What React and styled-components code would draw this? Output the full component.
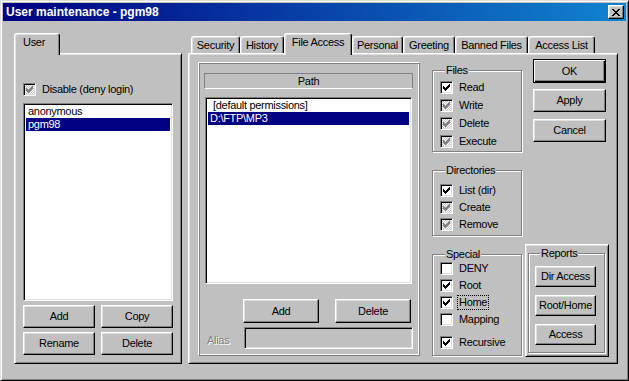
import React from 'react';
import styled, { createGlobalStyle } from 'styled-components';

const Global = createGlobalStyle`
  html, body { margin: 0; padding: 0; background: #c0c0c0; }
  body { font-family: "Liberation Sans", Arial, sans-serif; font-size: 11px; }
  * { box-sizing: border-box; }
`;

const Window = styled.div`
  width: 629px;
  height: 381px;
  background: #c0c0c0;
  border: 1px solid;
  border-color: #dfdfdf #000 #000 #dfdfdf;
  box-shadow: inset 1px 1px #fff, inset -1px -1px #808080;
  padding: 2px;
  display: flex;
  flex-direction: column;
  font-family: "Liberation Sans", Arial, sans-serif;
  font-size: 11px;
  letter-spacing: -0.3px;
  color: #000;
  overflow: hidden;
`;

const TitleBar = styled.div`
  height: 18px;
  flex: none;
  display: flex;
  align-items: center;
  padding: 0 2px 0 3px;
  background: linear-gradient(to right, #000080, #1084d0);
`;

const Title = styled.span`
  color: #fff;
  font-weight: bold;
  font-size: 12px;
  letter-spacing: 0;
`;

const CloseBtn = styled.div`
  margin-left: auto;
  width: 16px;
  height: 14px;
  background: #c0c0c0;
  border: 1px solid;
  border-color: #fff #000 #000 #fff;
  box-shadow: inset -1px -1px #808080, inset 1px 1px #dfdfdf;
  display: flex;
  align-items: center;
  justify-content: center;
  svg { display: block; }
`;

const Body = styled.div`
  flex: 1;
  display: flex;
  padding: 12px 0 0 11px;
`;

const TabSection = styled.div`
  width: ${p => p.$w}px;
  margin-left: ${p => p.$ml || 0}px;
  display: flex;
  flex-direction: column;
`;

const TabRow = styled.div`
  height: 20px;
  display: flex;
  align-items: flex-end;
  padding-left: ${p => p.$pl || 0}px;
`;

const Tab = styled.div`
  position: relative;
  z-index: ${p => (p.$active ? 2 : 1)};
  width: ${p => p.$w}px;
  height: ${p => (p.$active ? 22 : 17)}px;
  margin-bottom: ${p => (p.$active ? -2 : 0)}px;
  background: #c0c0c0;
  border-top: 1px solid #fff;
  border-left: 1px solid #fff;
  border-right: 1px solid #000;
  border-radius: 3px 3px 0 0;
  box-shadow: inset -1px 0 #808080, inset 1px 1px #dfdfdf;
  display: flex;
  justify-content: ${p => (p.$start ? 'flex-start' : 'center')};
  padding: 2px ${p => (p.$start ? 0 : 1)}px 0 ${p => (p.$start ? 8 : 1)}px;
  line-height: 13px;
  white-space: nowrap;
`;

const Panel = styled.div`
  height: 311px;
  border: 1px solid;
  border-color: #fff #000 #000 #fff;
  box-shadow: inset 1px 1px #dfdfdf, inset -1px -1px #808080;
  padding: ${p => p.$pad};
  display: flex;
  flex-direction: ${p => p.$dir || 'column'};
`;

const Row = styled.div`
  display: flex;
  align-items: center;
  gap: ${p => p.$gap ?? 5}px;
  height: ${p => p.$h || 13}px;
  margin-top: ${p => p.$mt || 0}px;
  line-height: 13px;
  white-space: nowrap;
`;

const Box = styled.span`
  width: 13px;
  height: 13px;
  flex: none;
  border: 1px solid;
  border-color: #808080 #fff #fff #808080;
  box-shadow: inset 1px 1px #000, inset -1px -1px #dfdfdf;
  background: ${p =>
    p.$disabled
      ? 'repeating-conic-gradient(#c0c0c0 0 25%, #fff 0 50%) 0 0 / 2px 2px'
      : '#fff'};
  display: flex;
  align-items: center;
  justify-content: center;
  svg { display: block; }
`;

const Label = styled.span`
  padding: 0 1px;
  outline: ${p => (p.$focus ? '1px dotted #000' : 'none')};
  outline-offset: 0;
`;

const ListBox = styled.div`
  height: ${p => p.$h}px;
  margin: ${p => p.$m || 0};
  background: #fff;
  border: 1px solid;
  border-color: #808080 #fff #fff #808080;
  box-shadow: inset 1px 1px #000, inset -1px -1px #dfdfdf;
  padding: 1px 2px;
  flex: none;
`;

const ListItem = styled.div`
  height: 13px;
  line-height: 13px;
  padding-left: ${p => (p.$indent ? 5 : 2)}px;
  background: ${p => (p.$sel ? '#000080' : 'transparent')};
  color: ${p => (p.$sel ? '#fff' : '#000')};
  white-space: nowrap;
`;

const Button = styled.div`
  width: ${p => p.$w}px;
  height: ${p => p.$h || 23}px;
  flex: none;
  margin: ${p => p.$m || 0};
  background: #c0c0c0;
  border: 1px solid;
  border-color: ${p => (p.$def ? '#000' : '#fff #000 #000 #fff')};
  box-shadow: ${p =>
    p.$def
      ? 'inset 1px 1px #fff, inset -1px -1px #000, inset -2px -2px #808080'
      : 'inset -1px -1px #808080, inset 1px 1px #dfdfdf'};
  display: flex;
  align-items: center;
  justify-content: center;
  line-height: 13px;
  white-space: nowrap;
`;

const ButtonRow = styled.div`
  display: flex;
  gap: ${p => p.$gap}px;
  margin-top: ${p => p.$mt || 0}px;
  padding-left: ${p => p.$pl || 0}px;
`;

const PathFrame = styled.div`
  width: 222px;
  height: 294px;
  flex: none;
  margin-top: 3px;
  border: 1px solid;
  border-color: #fff #808080 #808080 #fff;
  box-shadow: inset 1px 1px #808080, inset -1px -1px #fff;
  padding: 10px 6px 0 5px;
  display: flex;
  flex-direction: column;
`;

const Header = styled.div`
  height: 16px;
  flex: none;
  border: 1px solid;
  border-color: #808080 #808080 #fff #808080;
  display: flex;
  align-items: center;
  justify-content: center;
  line-height: 13px;
`;

const AliasRow = styled.div`
  display: flex;
  align-items: flex-end;
  margin-top: 4px;
  height: 22px;
`;

const DisabledText = styled.span`
  width: 40px;
  padding-left: 3px;
  padding-bottom: 2px;
  color: #808080;
  text-shadow: 1px 1px #fff;
  line-height: 13px;
`;

const TextInput = styled.div`
  flex: 1;
  height: 22px;
  background: #c0c0c0;
  border: 1px solid;
  border-color: #808080 #fff #fff #808080;
  box-shadow: inset 1px 1px #000, inset -1px -1px #dfdfdf;
`;

const ColA = styled.div`
  width: 90px;
  margin: 5px 0 0 12px;
  display: flex;
  flex-direction: column;
`;

const ColB = styled.div`
  width: 84px;
  margin-left: 3px;
  display: flex;
  flex-direction: column;
`;

const Group = styled.fieldset`
  margin: ${p => p.$m || 0};
  min-width: 0;
  height: ${p => p.$h}px;
  border: 1px solid #808080;
  box-shadow: 1px 1px 0 #fff, inset 1px 1px 0 #fff;
  padding: ${p => p.$pt}px 0 0 ${p => p.$pl ?? 7}px;
  display: flex;
  flex-direction: column;
  gap: ${p => p.$gap || 0}px;
  legend {
    padding: 0 1px;
    margin-left: 5px;
    line-height: 13px;
    background: #c0c0c0;
  }
`;

const RaisedFrame = styled.div`
  margin-top: auto;
  height: 113px;
  border: 1px solid;
  border-color: #fff #000 #000 #fff;
  box-shadow: inset 1px 1px #dfdfdf, inset -1px -1px #808080;
  padding: 2px 3px 2px 2px;
  display: flex;
  flex-direction: column;
`;

const checkPath = [[0, 2], [1, 3], [2, 4], [3, 3], [4, 2], [5, 1], [6, 0]]
  .map(([x, y]) => `M${x} ${y}h1v3h-1z`)
  .join('');

const Check = ({ color }) => (
  <svg width="7" height="7" viewBox="0 0 7 7" shapeRendering="crispEdges">
    <path d={checkPath} fill={color} />
  </svg>
);

const xPath = [
  [0, 0, 2], [6, 0, 2],
  [1, 1, 2], [5, 1, 2],
  [2, 2, 4],
  [3, 3, 2],
  [2, 4, 4],
  [1, 5, 2], [5, 5, 2],
  [0, 6, 2], [6, 6, 2],
]
  .map(([x, y, w]) => `M${x} ${y}h${w}v1h-${w}z`)
  .join('');

const CheckBox = ({ label, checked, disabled, focus, mt }) => (
  <Row $mt={mt}>
    <Box $disabled={disabled}>
      {checked && <Check color={disabled ? '#808080' : '#000'} />}
    </Box>
    <Label $focus={focus}>{label}</Label>
  </Row>
);

export default function App() {
  return (
    <>
      <Global />
      <Window>
        <TitleBar>
          <Title>User maintenance - pgm98</Title>
          <CloseBtn>
            <svg width="8" height="7" viewBox="0 0 8 7" shapeRendering="crispEdges">
              <path d={xPath} fill="#000" />
            </svg>
          </CloseBtn>
        </TitleBar>
        <Body>
          <TabSection $w={168}>
            <TabRow>
              <Tab $active $start $w={46}>User</Tab>
            </TabRow>
            <Panel $pad="29px 8px 0 8px">
              <CheckBox label="Disable (deny login)" checked disabled />
              <ListBox $h={198} $m="7px 0 0">
                <ListItem>anonymous</ListItem>
                <ListItem $sel>pgm98</ListItem>
              </ListBox>
              <ButtonRow $gap={6} $mt={4}>
                <Button $w={72}>Add</Button>
                <Button $w={72}>Copy</Button>
              </ButtonRow>
              <ButtonRow $gap={6} $mt={4}>
                <Button $w={72}>Rename</Button>
                <Button $w={72}>Delete</Button>
              </ButtonRow>
            </Panel>
          </TabSection>

          <TabSection $w={430} $ml={6}>
            <TabRow $pl={3}>
              <Tab $w={49}>Security</Tab>
              <Tab $w={44}>History</Tab>
              <Tab $active $w={68}>File Access</Tab>
              <Tab $w={51}>Personal</Tab>
              <Tab $w={52}>Greeting</Tab>
              <Tab $w={73}>Banned Files</Tab>
              <Tab $w={67}>Access List</Tab>
            </TabRow>
            <Panel $pad="5px 0 6px 9px" $dir="row">
              <PathFrame>
                <Header>Path</Header>
                <ListBox $h={187} $m="8px 1px 0">
                  <ListItem $indent>[default permissions]</ListItem>
                  <ListItem $sel>D:\FTP\MP3</ListItem>
                </ListBox>
                <ButtonRow $gap={16} $mt={15} $pl={39}>
                  <Button $w={76} $h={24}>Add</Button>
                  <Button $w={76} $h={24}>Delete</Button>
                </ButtonRow>
                <AliasRow>
                  <DisabledText>Alias</DisabledText>
                  <TextInput />
                </AliasRow>
              </PathFrame>

              <ColA>
                <Group $h={88} $pt={4} $gap={5}>
                  <legend>Files</legend>
                  <CheckBox label="Read" checked />
                  <CheckBox label="Write" checked disabled />
                  <CheckBox label="Delete" checked disabled />
                  <CheckBox label="Execute" checked disabled />
                </Group>
                <Group $h={72} $pt={7} $gap={4} $m="12px 0 0">
                  <legend>Directories</legend>
                  <CheckBox label="List (dir)" checked />
                  <CheckBox label="Create" checked disabled />
                  <CheckBox label="Remove" checked disabled />
                </Group>
                <Group $h={108} $pt={1} $gap={4} $m="12px 0 0">
                  <legend>Special</legend>
                  <CheckBox label="DENY" />
                  <CheckBox label="Root" checked />
                  <CheckBox label="Home" checked focus />
                  <CheckBox label="Mapping" />
                  <CheckBox label="Recursive" checked mt={6} />
                </Group>
              </ColA>

              <ColB>
                <Button $w={73} $h={24} $def $m="0 0 0 8px">OK</Button>
                <Button $w={73} $m="6px 0 0 8px">Apply</Button>
                <Button $w={73} $m="7px 0 0 8px">Cancel</Button>
                <RaisedFrame>
                  <Group $h={106} $pt={6} $pl={6} $gap={8} $m="0">
                    <legend>Reports</legend>
                    <Button $w={61} $h={21}>Dir Access</Button>
                    <Button $w={61} $h={21}>Root/Home</Button>
                    <Button $w={61} $h={21}>Access</Button>
                  </Group>
                </RaisedFrame>
              </ColB>
            </Panel>
          </TabSection>
        </Body>
      </Window>
    </>
  );
}
